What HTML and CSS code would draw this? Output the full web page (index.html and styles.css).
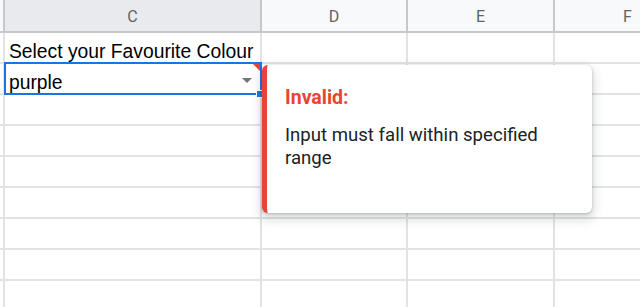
FILE: index.html
```html
<!DOCTYPE html>
<html lang="en">
<head>
  <meta charset="UTF-8" />
  <title>Data validation</title>
  <link rel="stylesheet" href="styles.css">
</head>
<body>

  <div class="viewport">
    <div class="sheet">
      <!-- column headers -->
      <div class="hdr"></div>
      <div class="hdr active">C</div>
      <div class="hdr">D</div>
      <div class="hdr">E</div>
      <div class="hdr">F</div>

      <!-- row 1 -->
      <div class="cell stub"></div>
      <div class="cell">Select your Favourite Colour</div>
      <div class="cell"></div>
      <div class="cell"></div>
      <div class="cell"></div>

      <!-- row 2: selected dropdown cell -->
      <div class="cell stub"></div>
      <div class="cell selected">
        <span>purple</span>
        <span class="caret"></span>
        <span class="flag"></span>
        <span class="handle"></span>
      </div>
      <div class="cell"></div>
      <div class="cell"></div>
      <div class="cell"></div>

      <div class="cell stub"></div><div class="cell"></div><div class="cell"></div><div class="cell"></div><div class="cell"></div>
      <div class="cell stub"></div><div class="cell"></div><div class="cell"></div><div class="cell"></div><div class="cell"></div>
      <div class="cell stub"></div><div class="cell"></div><div class="cell"></div><div class="cell"></div><div class="cell"></div>
      <div class="cell stub"></div><div class="cell"></div><div class="cell"></div><div class="cell"></div><div class="cell"></div>
      <div class="cell stub"></div><div class="cell"></div><div class="cell"></div><div class="cell"></div><div class="cell"></div>
      <div class="cell stub"></div><div class="cell"></div><div class="cell"></div><div class="cell"></div><div class="cell"></div>
      <div class="cell stub"></div><div class="cell"></div><div class="cell"></div><div class="cell"></div><div class="cell"></div>

      <!-- validation popup -->
      <div class="popup">
        <div class="popup-title">Invalid:</div>
        <div class="popup-text">Input must fall within specified range</div>
      </div>
    </div>
  </div>

</body>
</html>
```

FILE: styles.css
```css
body {
  margin: 0;
  overflow: hidden;
  background: #fff;
}

.viewport {
  width: 640px;
  height: 307px;
  overflow: hidden;
}

.sheet {
  position: relative;
  display: grid;
  grid-template-columns: 5px 257px 146px 147px 147px;
  grid-template-rows: 33px repeat(9, 31px);
  width: 702px;
}

.hdr {
  box-sizing: border-box;
  background: #f8f9fa;
  border-right: 2px solid #c7c7c7;
  border-bottom: 2px solid #c7c7c7;
  color: #5f6368;
  font-family: Roboto, sans-serif;
  font-size: 16px;
  display: flex;
  justify-content: center;
  align-items: center;
  padding-top: 1px;
}

.hdr.active {
  background: #e8eaed;
}

.cell {
  box-sizing: border-box;
  border-right: 2px solid #e2e3e3;
  border-bottom: 2px solid #e2e3e3;
  font-family: "Liberation Sans", Arial, sans-serif;
  font-size: 19.3px;
  line-height: 20px;
  color: #000;
  display: flex;
  align-items: flex-end;
  padding: 0 0 0 4px;
  white-space: nowrap;
}

.cell.stub {
  padding: 0;
}

.selected {
  position: relative;
}

.selected::after {
  content: '';
  position: absolute;
  left: -1px;
  top: -2px;
  right: -2px;
  bottom: -2px;
  border: 2px solid #1a73e8;
}

.caret {
  margin-left: auto;
  margin-right: 8px;
  margin-bottom: 10px;
  width: 0;
  height: 0;
  border-left: 5.5px solid transparent;
  border-right: 5.5px solid transparent;
  border-top: 5px solid #757575;
}

.flag {
  position: absolute;
  top: 0;
  right: 0;
  width: 0;
  height: 0;
  border-top: 7px solid #ea4335;
  border-left: 7px solid transparent;
  z-index: 1;
}

.handle {
  position: absolute;
  right: -4px;
  bottom: -5px;
  width: 6px;
  height: 6px;
  background: #1a73e8;
  border: 1px solid #fff;
  z-index: 1;
}

.popup {
  position: absolute;
  left: 262px;
  top: 65px;
  width: 330px;
  height: 148px;
  box-sizing: border-box;
  background: #fff;
  border-left: 5px solid #ea4335;
  border-radius: 6px;
  box-shadow: 0 5px 10px 3px rgba(60, 64, 67, 0.15), 0 1px 3px rgba(60, 64, 67, 0.3);
  padding: 21px 40px 0 18px;
  font-family: Roboto, sans-serif;
  z-index: 2;
}

.popup-title {
  color: #ea4335;
  font-weight: 700;
  font-size: 19.5px;
  line-height: 24px;
}

.popup-text {
  margin-top: 14px;
  color: #202124;
  font-size: 18.6px;
  line-height: 22.5px;
}
```
